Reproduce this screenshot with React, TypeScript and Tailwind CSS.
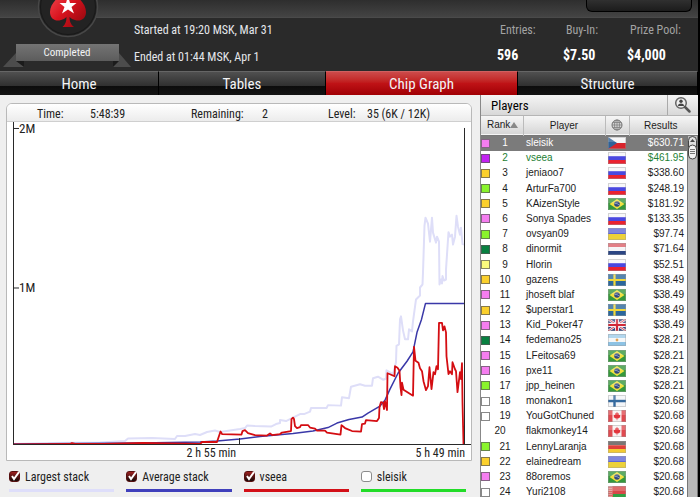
import React, { useState } from "react";
import clsx from "clsx";

const narrow = "font-['Liberation_Sans_Narrow','Roboto_Condensed','Liberation_Sans',sans-serif]";

type Country = "cz" | "ru" | "br" | "ua" | "nl" | "se" | "gb" | "ar" | "fi" | "ca" | "de" | "by";

const PINK = "bg-[#f57df0]";
const GOLD = "bg-[#fbd02c]";
const LIME = "bg-[#8af42c]";
const DARK = "bg-[#078040]";
const NONE = "bg-white";

const players: [number, string, Country, string, string][] = [
  [1, "sleisik", "cz", "$630.71", PINK],
  [2, "vseea", "ru", "$461.95", "bg-[#c322f2]"],
  [3, "jeniaoo7", "ru", "$338.60", GOLD],
  [4, "ArturFa700", "ru", "$248.19", LIME],
  [5, "KAizenStyle", "br", "$181.92", GOLD],
  [6, "Sonya Spades", "ru", "$133.35", PINK],
  [7, "ovsyan09", "ua", "$97.74", LIME],
  [8, "dinormit", "nl", "$71.64", DARK],
  [9, "Hlorin", "ru", "$52.51", "bg-[#fbfb7d]"],
  [10, "gazens", "se", "$38.49", GOLD],
  [11, "jhoseft blaf", "br", "$38.49", PINK],
  [12, "$uperstar1", "se", "$38.49", GOLD],
  [13, "Kid_Poker47", "gb", "$38.49", PINK],
  [14, "fedemano25", "ar", "$28.21", DARK],
  [15, "LFeitosa69", "br", "$28.21", PINK],
  [16, "pxe11", "br", "$28.21", PINK],
  [17, "jpp_heinen", "br", "$28.21", LIME],
  [18, "monakon1", "fi", "$20.68", NONE],
  [19, "YouGotChuned", "ca", "$20.68", NONE],
  [20, "flakmonkey14", "ca", "$20.68", ""],
  [21, "LennyLaranja", "de", "$20.68", LIME],
  [22, "elainedream", "ua", "$20.68", GOLD],
  [23, "88oremos", "br", "$20.68", PINK],
  [24, "Yuri2108", "by", "$20.68", NONE],
];

function Stripes({ colors }: { colors: string[] }) {
  const h = 12 / colors.length;
  return (
    <>
      {colors.map((c, i) => (
        <rect key={i} x="0" y={i * h} width="18" height={h} fill={c} />
      ))}
    </>
  );
}

const flagArt: Record<Country, React.ReactNode> = {
  cz: (
    <>
      <Stripes colors={["#f4f4f6", "#d8242c"]} />
      <path d="M0 0L9 6L0 12Z" fill="#2f6298" />
    </>
  ),
  ru: <Stripes colors={["#f6f6f8", "#4a48e0", "#ea2230"]} />,
  br: (
    <>
      <rect width="18" height="12" fill="#35983c" />
      <path d="M9 1L16.500 6L9 11L1.500 6Z" fill="#f0e040" />
      <circle cx="9" cy="6" r="2.800" fill="#31487e" />
      <path d="M6.500 5.500Q9 5 11.500 7" stroke="#c8d4e8" strokeWidth=".6" fill="none" />
    </>
  ),
  ua: <Stripes colors={["#5f68d8", "#ecd13a"]} />,
  nl: <Stripes colors={["#dc6068", "#f4f4f6", "#2c4684"]} />,
  se: (
    <>
      <rect width="18" height="12" fill="#2b679c" />
      <path d="M6.500 0V12M0 6H18" stroke="#f1d83c" strokeWidth="2.200" />
    </>
  ),
  gb: (
    <>
      <rect width="18" height="12" fill="#33437f" />
      <path d="M0 0L18 12M18 0L0 12" stroke="#f0e8ee" strokeWidth="2.400" />
      <path d="M0 0L18 12M18 0L0 12" stroke="#cf3a4a" strokeWidth=".9" />
      <path d="M9 0V12M0 6H18" stroke="#f6f0f4" strokeWidth="4" />
      <path d="M9 0V12M0 6H18" stroke="#d12838" strokeWidth="2.200" />
    </>
  ),
  ar: (
    <>
      <Stripes colors={["#9fcdea", "#f5f7f8", "#8cc2e4"]} />
      <circle cx="9" cy="6" r="1.400" fill="#e0a458" />
    </>
  ),
  fi: (
    <>
      <rect width="18" height="12" fill="#f3f5f8" />
      <path d="M6.500 0V12M0 6H18" stroke="#356a9e" strokeWidth="2.400" />
    </>
  ),
  ca: (
    <>
      <rect width="18" height="12" fill="#f6f2f2" />
      <path d="M0 0H4.500V12H0ZM13.500 0H18V12H13.500Z" fill="#e04a50" />
      <path d="M9 1.800L10 3.600L11 3.200L10.800 5L12.500 4.800L12 6.500L12.600 7L10.200 8.600H9.300V10.300H8.700V8.600H7.800L5.400 7L6 6.500L5.500 4.800L7.200 5L7 3.200L8 3.600Z" fill="#e2353d" />
    </>
  ),
  de: <Stripes colors={["#5a5452", "#e0403a", "#f3ca32"]} />,
  by: (
    <>
      <rect width="18" height="12" fill="#d84848" />
      <rect y="8" width="18" height="4" fill="#31a044" />
      <rect width="5" height="12" fill="#d86a66" />
      <path d="M1 0V12M3 0V12" stroke="#f0dcdc" strokeWidth=".8" strokeDasharray="1 1" />
    </>
  ),
};

function Flag({ code }: { code: Country }) {
  return (
    <svg viewBox="0 0 18 12" className="mx-auto block h-3 w-[18px]" role="img" aria-label={code}>
      {flagArt[code]}
      <rect width="18" height="5" fill="#fff" opacity=".2" />
      <rect x=".5" y=".5" width="17" height="11" fill="none" stroke="#9a9a9a" strokeOpacity=".4" />
    </svg>
  );
}

const LARGEST =
  "13,445 50,444 100,443.5 125,442 128,439.5 152,439 175,440 177,437 185,437 195,435 200,436 207,433 215,431.5 220,433 230,431.5 240,430 245,429 247,426.500 255,427 271,427.5 276,425 280,424 280,421 286,422 295,417.5 300,415 304,415 310,412.5 311,409 326.5,409 328,406 341,406.5 342,398 349,399 351,387.5 360,385 365,386.5 372,386.5 373,379 378,377.5 383,380.5 386,379.5 386.5,371 393,375 396,363 396.5,346.5 399,345 400,320 401,317 403,331 405,340 408,340 409,330 412,332 413,322 416,300 420,296 420,288 422.5,285 423,273 424.5,226 425.5,218 428,224 430,242 431,230 432,218 433,233 436,243 437,237 439,242 439.5,285 441,280 442,284 442.5,276.5 444,281 446,280 446,270 448.5,232.5 450,237 452,235 453,245 455,237 456.5,216 458,227 460,235 461,228 462.5,244.5 464,245";
const AVERAGE =
  "13,445 140,444 200,443 217,442 240,440 260,437.5 293,434.5 313,432 328,428.5 337,424 349,420.5 362,418 368,414 380,407 385,401 390,390 398,374 407,362 413,352.5 417,333 421.5,320 425.5,304 464,304";
const VSEEA =
  "13,445.5 70,445 72,444 76,445 104,445 143,444 200,445 202,443 217,443 218,440 220.5,432.5 222,435 241.5,435.5 242.5,432 245,431 248,434 255,436 267,436.500 270,434.5 272,436 280,435 282,433.5 291,432 291.5,420 293,418.5 294,420 295,427 297,429 300,428 301,426 308,426 310,428.5 315,429.5 317,431.5 325,431.5 327,433.5 340.5,435.5 341.5,426 345,429 352,432 361,432.5 362,425 365,424.5 366,421 377,422 379,419 379.5,408 381,403 383,403.5 384,410 385,402 387,411 387.5,374 390,375 394.5,377 395,367 397.5,368.5 399.5,371.5 400.5,388 401.5,396 402,383.5 403.5,390.5 413,396.5 414,347.5 415.5,361.5 418.5,363.5 420,369 422,372 423.5,382 426,391 428,387 429.5,368 431.5,390 433.5,373 435,375 436.5,367 438,370 439,323.5 442,323.5 443,331 444.5,327 446,333 446.5,357 448.5,375 450,372 452,375 452.5,363 455,370 456,372 457.5,393 460,373 461,380 462,364 462.5,403 463.5,445";

function StarsLogo() {
  return (
    <svg viewBox="0 0 64 38" className="absolute left-9 top-0 h-[38px] w-16" role="img" aria-label="Star spade logo">
      <defs>
        <linearGradient id="spade" x1="0" y1="0" x2="1" y2="1">
          <stop offset="0" stopColor="#f4555b" />
          <stop offset=".5" stopColor="#d9131e" />
          <stop offset="1" stopColor="#8d070d" />
        </linearGradient>
      </defs>
      <circle cx="32" cy="7" r="29.500" fill="#232323" stroke="#474747" strokeWidth="1.500" />
      <circle cx="32" cy="7" r="27.500" fill="none" stroke="#181818" strokeWidth="1" />
      <path
        d="M32 -14C28 -6 14 1 14 12C14 19 20 22 25 20C27 19.500 29 18.500 30.500 17C30.500 21 29.500 24.500 26.500 27H38C34.500 24.500 33.500 21 33.500 17C35 18.500 37 19.500 39 20C44 22 50 19 50 12C50 1 36 -6 32 -14Z"
        fill="url(#spade)"
      />
      <path d="M32 -4L34 3H40.500L35.500 7L38 13.500L32 9.500L26 13.500L28.500 7L23.500 3H30Z" fill="#fff" />
    </svg>
  );
}

function Ribbon() {
  return (
    <div className="relative mt-[43px] h-6 w-32">
      <svg viewBox="0 0 128 24" className="absolute inset-0 h-6 w-32" aria-hidden="true">
        <defs>
          <linearGradient id="ribbon" x1="0" y1="0" x2="0" y2="1">
            <stop offset="0" stopColor="#747474" />
            <stop offset="1" stopColor="#5c5c5c" />
          </linearGradient>
        </defs>
        <path d="M0 24L13 10V17L21 20V24ZM128 24L116 10V17L110 20V24Z" fill="#4c4c4c" />
        <path d="M13 18H21V24ZM116 18H110V24Z" fill="#1b1b1b" />
        <rect x="13" y="1" width="103" height="17" fill="url(#ribbon)" />
      </svg>
      <span className={clsx(narrow, "relative block pt-[3px] text-center text-[11px] leading-[14px] text-gray-100")}>Completed</span>
    </div>
  );
}

function Stat({ label, value, className }: { label: string; value: string; className: string }) {
  return (
    <div className={className}>
      <dt className="pl-[3px] text-xs leading-4 text-[#a3a3a3]">{label}</dt>
      <dd className="mt-[9px] text-sm font-bold leading-4 text-white">{value}</dd>
    </div>
  );
}

const tabs = ["Home", "Tables", "Chip Graph", "Structure"];

function LegendItem({ label, color, initial }: { label: string; color: string; initial: boolean }) {
  const [on, setOn] = useState(initial);
  return (
    <label className="block">
      <span className="flex h-[18px] items-center gap-1">
        <span className="relative size-3">
          <input
            type="checkbox"
            checked={on}
            onChange={() => setOn(!on)}
            className="block size-[11px] appearance-none rounded-[3px] border border-[#8c8c8c] bg-white checked:border-[#571010] checked:bg-linear-to-b checked:from-[#a02020] checked:to-[#180808]"
          />
          {on && (
            <svg viewBox="0 0 12 12" className="pointer-events-none absolute inset-0 size-3" aria-hidden="true">
              <path d="M3 5L5 8L10 1" stroke="#fff" strokeWidth="2" fill="none" />
            </svg>
          )}
        </span>
        {label}
      </span>
      <span className={clsx("mt-[3px] block h-[3px]", color)} />
    </label>
  );
}

function ChipGraph() {
  return (
    <section className={clsx(narrow, "flex min-w-0 flex-1 flex-col bg-[#efefef] pl-1.5 pr-2 pt-2 text-xs text-[#222]")}>
      <div className="flex min-h-0 flex-1 flex-col overflow-hidden rounded-t-md border border-[#b9b9b9] bg-white">
        <div className="flex h-[18px] shrink-0 items-center border-b border-[#cfcfcf] bg-linear-to-b from-white to-[#ececec] pl-[30px] pt-0.5">
          <span className="w-[53px]">Time:</span>
          <span className="w-[101px]">5:48:39</span>
          <span className="w-[71px]">Remaining:</span>
          <span className="w-[66px]">2</span>
          <span className="w-[39px]">Level:</span>
          <span>35 (6K / 12K)</span>
        </div>
        <div className="relative min-h-0 flex-1">
          <svg viewBox="7 122 464 324" preserveAspectRatio="none" className="absolute inset-0 size-full" role="img" aria-label="Chip counts over time">
            <g fill="none" strokeLinejoin="round">
              <polyline points={LARGEST} stroke="#dedef8" strokeWidth="2" />
              <polyline points={AVERAGE} stroke="#3a38a8" strokeWidth="1.500" />
              <polyline points={VSEEA} stroke="#d40d12" strokeWidth="1.800" />
              <path d="M13.500 122V445.500H471M13.500 128.500H19M13.500 288.500H19M239.500 439V445M464.500 128V445" stroke="#282828" />
            </g>
          </svg>
          <span className="absolute left-3 top-0 text-[13px] leading-[13px]">2M</span>
          <span className="absolute left-3 top-[49%] text-[13px] leading-4">1M</span>
        </div>
        <div className="flex h-[15px] shrink-0 justify-between pr-1.5 leading-4">
          <span className="w-1/2 text-right">2 h 55 min</span>
          <span>5 h 49 min</span>
        </div>
      </div>
      <div className="grid h-9 shrink-0 grid-cols-4 gap-3 pl-[3px] pr-1.5 pt-[7px]">
        <LegendItem label="Largest stack" color="bg-[#dedefa]" initial />
        <LegendItem label="Average stack" color="bg-[#4040bc]" initial />
        <LegendItem label="vseea" color="bg-[#d31018]" initial />
        <LegendItem label="sleisik" color="bg-[#22dc28]" initial={false} />
      </div>
    </section>
  );
}

function Globe() {
  return (
    <svg viewBox="0 0 12 12" className="mx-auto block size-3" role="img" aria-label="Country">
      <circle cx="6" cy="6" r="5" fill="#d4d4d4" stroke="#707070" />
      <path d="M6 1V11M1 6H11M2 3.500H10M2 8.500H10" stroke="#808080" strokeWidth=".8" />
      <ellipse cx="6" cy="6" rx="2.500" ry="5" fill="none" stroke="#808080" strokeWidth=".8" />
    </svg>
  );
}

function PlayerList() {
  return (
    <section className="flex w-[218px] shrink-0 flex-col overflow-hidden border-l border-[#888] bg-white font-['Liberation_Sans',Arial,sans-serif] text-[10px] text-[#1c1c1c]">
      <div className="flex h-[21px] shrink-0 border-b border-[#b5b5b5] bg-linear-to-b from-[#f5f5f5] to-[#d8d8d8]">
        <h2 className={clsx(narrow, "flex-1 pl-2.5 text-[13px] leading-[22px] text-black")}>Players</h2>
        <button type="button" aria-label="Find player" className="w-[31px] border-l border-[#aaa]">
          <svg viewBox="0 0 18 18" className="mx-auto size-[18px]" aria-hidden="true">
            <circle cx="7" cy="7" r="5.300" fill="#eee" stroke="#666" strokeWidth="1.500" />
            <circle cx="7" cy="5.200" r="1.700" fill="#444" />
            <path d="M4 10C4 6.800 10 6.800 10 10Z" fill="#444" />
            <path d="M11 11L15.500 15.500" stroke="#555" strokeWidth="2.500" strokeLinecap="round" />
          </svg>
        </button>
      </div>
      <div className="relative min-h-0 flex-1 overflow-hidden">
        <table className="h-[384px] w-full table-fixed border-collapse">
          <colgroup>
            <col className="w-[42px]" />
            <col className="w-[82px]" />
            <col className="w-6" />
            <col />
          </colgroup>
          <thead>
            <tr className="h-[19px] border-b border-[#777] bg-linear-to-b from-[#f6f6f6] to-[#d6d6d6]">
              <th className="border-r border-[#bbb] p-0 pl-1.5 text-left font-normal leading-4">
                <span className="flex items-center">
                  Rank
                  <svg viewBox="0 0 8 6" className="h-1.5 w-2" aria-hidden="true">
                    <path d="M0 6L4 0L8 6Z" fill="#888" />
                  </svg>
                </span>
              </th>
              <th className="border-r border-[#bbb] p-0 font-normal">Player</th>
              <th className="border-r border-[#bbb] p-0 font-normal"><Globe /></th>
              <th className="p-0 pr-1.5 font-normal">Results</th>
            </tr>
          </thead>
          <tbody>
            {players.map(([rank, name, country, prize, color]) => (
              <tr key={rank} className={clsx(rank === 1 && "bg-[#7b7b7b] text-white", rank === 2 && "text-[#1d7f35]")}>
                <td className="p-0 leading-[14px]">
                  <span className="flex items-center">
                    {color && <span className={clsx("size-[9px] border border-[#555]/70", color)} />}
                    <span className={clsx("w-[30px] text-center", !color && "ml-1")}>{rank}</span>
                  </span>
                </td>
                <td className="whitespace-nowrap p-0 pl-[3px] leading-[14px]">{name}</td>
                <td className="p-0"><Flag code={country} /></td>
                <td className="p-0 pr-[14px] text-right leading-[14px]">{prize}</td>
              </tr>
            ))}
          </tbody>
        </table>
        <div className="absolute bottom-0 right-0 top-5 w-[11px] border-x border-[#777] bg-[#b9b9b9]">
          <svg viewBox="0 0 9 24" className="h-6 w-[9px]" aria-hidden="true">
            <rect x=".5" y=".5" width="8" height="22" rx="4" fill="#ddd" stroke="#444" />
            <path d="M2 6L4.500 3L7 6Z" fill="#444" />
            <rect x=".5" y="9" width="8" height="14" rx="4" fill="#f2f2f2" stroke="#444" />
            <path d="M2 13.500H7M2 15.500H7M2 17.500H7" stroke="#555" strokeWidth=".8" />
          </svg>
        </div>
      </div>
    </section>
  );
}

export default function App() {
  return (
    <div className="flex h-screen flex-col overflow-hidden border-r-2 border-black bg-[#292929]">
      <header className={clsx(narrow, "relative flex h-[71px] shrink-0 bg-[#2a2a2a] text-xs text-gray-200")}>
        <div className="absolute inset-x-0 top-0 h-[18px] border-b border-[#4a4a4a] bg-linear-to-b from-[#2e2e2e] to-[#444]" />
        <StarsLogo />
        <button
          type="button"
          aria-label="Tournament lobby"
          className="absolute right-1.5 top-0 h-3 w-[106px] rounded-b-md border border-t-0 border-black bg-linear-to-b from-[#303030] to-[#1c1c1c]"
        />
        <div className="relative flex w-full">
          <div className="w-[134px] pl-[3px]">
            <Ribbon />
          </div>
          <div className="flex-1 pt-[22px] leading-4">
            <p>Started at 19:20 MSK, Mar 31</p>
            <p className="mt-[11px]">Ended at 01:44 MSK, Apr 1</p>
          </div>
          <dl className="flex pt-[22px]">
            <Stat label="Entries:" value="596" className="w-[66px]" />
            <Stat label="Buy-In:" value="$7.50" className="w-16" />
            <Stat label="Prize Pool:" value="$4,000" className="w-[71px]" />
          </dl>
        </div>
      </header>
      <nav className={clsx(narrow, "grid h-6 shrink-0 grid-cols-[159fr_167fr_192fr_180fr]")}>
        {tabs.map((tab) => (
          <button
            key={tab}
            type="button"
            className={clsx(
              "border-r border-t border-r-black text-[15px] leading-5 text-gray-100",
              tab === "Chip Graph"
                ? "border-t-[#d06060] bg-linear-to-b from-[#cc4a4a] from-0% via-[#bf1216] via-50% to-[#a00004]"
                : "border-t-[#666] bg-[linear-gradient(#505050,#303030_60%,#0c0c0c_61%,#141414)]"
            )}
          >
            {tab}
          </button>
        ))}
      </nav>
      <main className="flex min-h-0 flex-1">
        <ChipGraph />
        <PlayerList />
      </main>
    </div>
  );
}
